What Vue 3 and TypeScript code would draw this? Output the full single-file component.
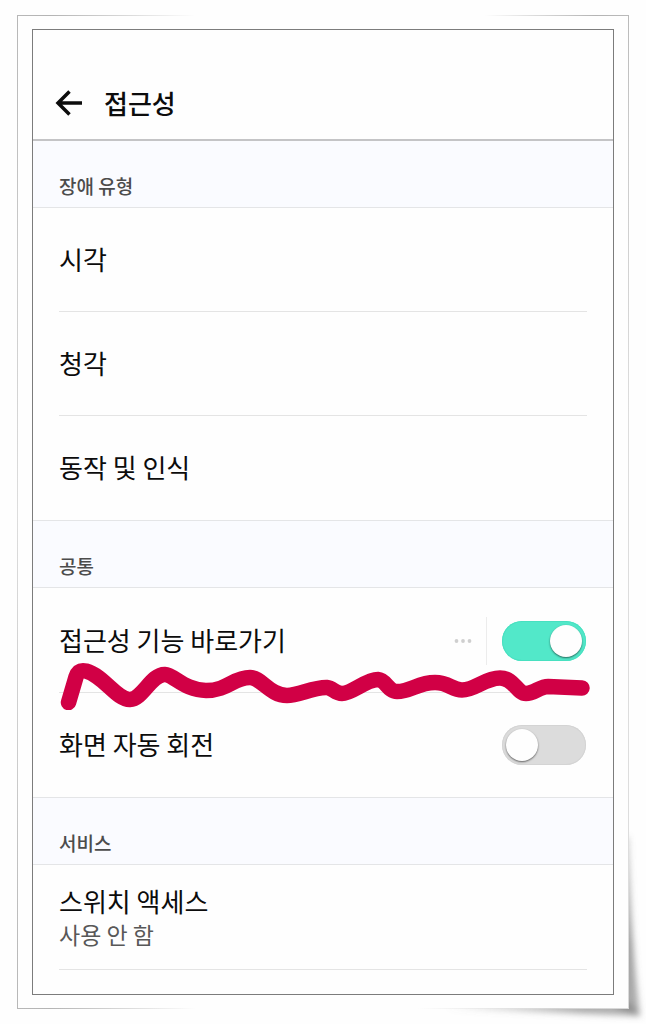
<script setup lang="ts">
import { ref } from 'vue'

const disabilityTypes: string[] = ['시각', '청각', '동작 및 인식']
const shortcutOn = ref<boolean>(true)
const rotateOn = ref<boolean>(false)
</script>

<template>
  <div class="page">
    <div class="paper">
      <svg class="curl" viewBox="0 0 220 200" aria-hidden="true">
        <defs>
          <filter id="curl-blur" x="-10%" y="-10%" width="120%" height="120%">
            <feGaussianBlur stdDeviation="3" />
          </filter>
          <linearGradient id="curl-side" x1="0" y1="0" x2="0" y2="1">
            <stop offset="0" stop-color="#777" stop-opacity="0.3" />
            <stop offset="0.6" stop-color="#777" stop-opacity="0.7" />
            <stop offset="1" stop-color="#777" stop-opacity="0.6" />
          </linearGradient>
          <linearGradient id="curl-base" x1="0" y1="0" x2="1" y2="0">
            <stop offset="0" stop-color="#777" stop-opacity="0" />
            <stop offset="0.7" stop-color="#777" stop-opacity="0.6" />
            <stop offset="1" stop-color="#777" stop-opacity="0.6" />
          </linearGradient>
        </defs>
        <g filter="url(#curl-blur)">
          <path d="M190 10 L203 10 Q205 120 214 189 L190 180 Z" fill="url(#curl-side)" />
          <path d="M20 176 L203 176 L214 189 Q120 185 20 182 Z" fill="url(#curl-base)" />
        </g>
      </svg>
      <div class="sheet">
        <main class="screen">
          <header class="bar">
            <button class="back" type="button" aria-label="뒤로">
              <svg viewBox="0 0 28 28" width="28" height="28" aria-hidden="true">
                <path d="M27 14H3M14.500 2.500L3 14L14.500 25.500" />
              </svg>
            </button>
            <h1>접근성</h1>
          </header>

          <section>
            <h2>장애 유형</h2>
            <button v-for="name in disabilityTypes" :key="name" class="row" type="button">
              <span class="line">{{ name }}</span>
            </button>
          </section>

          <section>
            <h2>공통</h2>
            <div class="switches">
              <div class="row tall">
                <label class="line" for="shortcut">접근성 기능 바로가기</label>
                <button class="more" type="button" aria-label="더보기">
                  <svg viewBox="0 0 18 4" width="18" height="4" aria-hidden="true">
                    <circle cx="2.500" cy="2" r="1.900" />
                    <circle cx="9" cy="2" r="1.900" />
                    <circle cx="15.500" cy="2" r="1.900" />
                  </svg>
                </button>
                <input id="shortcut" v-model="shortcutOn" class="toggle" type="checkbox" role="switch" />
              </div>
              <div class="row">
                <label class="line" for="rotate">화면 자동 회전</label>
                <input id="rotate" v-model="rotateOn" class="toggle" type="checkbox" role="switch" />
              </div>
              <svg class="scribble" viewBox="50 650 550 60" aria-hidden="true">
                <path
                  d="M68.500 702.500L76 677C78 671 81 670 86 671C104 676 117 700 130 699.500C143 699 151 674 165 674.500C174 675 185 690.500 206 690.500C228 690.500 233 677.500 250 677.500C261 677.500 270 695.500 287 695.500C299 695.500 313 687 327 687.500C333 688 335 693.500 342 693.500C352 693.500 366 679.500 378 679.500C386 680 388 691.500 397 691.500C411 691.500 418 682.500 435 682.500C449 682.500 452 690 462 690C475 690 485 678 500 678C514 678 517 693.500 526 693.500C534 693.500 540 686.500 548 686.500L582 688"
                />
              </svg>
            </div>
          </section>

          <section>
            <h2>서비스</h2>
            <button class="row tall service" type="button">
              <span class="line">스위치 액세스</span>
              <span class="state">사용 안 함</span>
            </button>
          </section>
        </main>
      </div>
    </div>
  </div>
</template>

<style>
body {
  margin: 0;
  background: #fff;
}
</style>

<style scoped>
.page {
  box-sizing: border-box;
  min-height: 100vh;
  padding: 15px 17px;
  overflow: hidden;
  background: #fefefe;
  font-family: "Noto Sans CJK KR", "Noto Sans", sans-serif;
  color: #0c0c0c;
}

.paper {
  position: relative;
  isolation: isolate;
}

.sheet {
  padding: 13px 14px;
  border: 1px solid #ccc;
  border-image: conic-gradient(from 0deg, #fefefe 0%, #fefefe 5%, #b4b4b4 8%, #ccc 11%, #ddd 20%, #ddd 40%, #d4d4d4 43%, #fefefe 47%, #fefefe 54%, #b4b4b4 58%, #ccc 64%, #ddd 75%, #ccc 86%, #b4b4b4 92%, #fefefe 96%) 1;
  background: #fefefe;
}

.curl {
  position: absolute;
  z-index: -1;
  right: -17px;
  bottom: -18px;
  width: 220px;
  height: 200px;
}

.screen {
  border: 1px solid #7c7c7c;
  padding-bottom: 24px;
}

.bar {
  display: flex;
  align-items: center;
  gap: 21px;
  padding: 36px 22px 0;
  height: 73px;
  border-bottom: 2px solid #c4c4c6;
}

button {
  margin: 0;
  padding: 0;
  border: 0;
  background: none;
  color: inherit;
  font: inherit;
  text-align: left;
}

.back {
  width: 28px;
  height: 28px;
}

.back svg,
.more svg {
  display: block;
}

.back path {
  fill: none;
  stroke: #0c0c0c;
  stroke-width: 3.5;
}

h1 {
  margin: 0;
  font-size: 26px;
  line-height: 34px;
  font-weight: 500;
}

h2 {
  margin: 0;
  padding: 31px 26px 7px;
  border-bottom: 1px solid #e4e5e7;
  background: #fafbff;
  color: #4c4c4c;
  font-size: 19px;
  line-height: 28px;
  font-weight: 500;
}

section + section h2 {
  border-top: 1px solid #e4e5e7;
}

.row {
  position: relative;
  display: flex;
  align-items: center;
  box-sizing: border-box;
  width: 100%;
  min-height: 104px;
  padding: 0 26px;
}

.row.tall {
  min-height: 105px;
}

.row:not(:last-of-type)::after,
.service::after {
  content: "";
  position: absolute;
  right: 26px;
  bottom: 0;
  left: 26px;
  height: 1px;
  background: #e4e4e4;
}

.line {
  flex: 1;
  padding-bottom: 2px;
  font-size: 26px;
  line-height: 34px;
}

.service {
  flex-direction: column;
  align-items: flex-start;
  justify-content: center;
}

.service .line {
  flex: none;
  padding-bottom: 0;
}

.state {
  padding-bottom: 2px;
  color: #585858;
  font-size: 23px;
  line-height: 32px;
}

.switches {
  position: relative;
}

.more {
  display: flex;
  align-items: center;
  height: 48px;
  padding-right: 14px;
  margin-right: 14px;
  border-right: 1px solid #ececec;
}

.more circle {
  fill: #cfcfcf;
}

.toggle {
  appearance: none;
  flex: none;
  box-sizing: border-box;
  width: 84px;
  height: 40px;
  margin: 0 1px;
  padding: 4px;
  border-radius: 20px;
  background: #dcdcdc;
  box-shadow: inset 0 0 0 1px #d4d4d4;
}

.toggle::before {
  content: "";
  display: block;
  width: 32px;
  height: 32px;
  border-radius: 50%;
  background: #fefefe;
  box-shadow: 0 1px 2px rgba(0, 0, 0, 0.55);
}

.toggle:checked {
  background: #52e8c9;
  box-shadow: inset 0 0 0 1px #48e0c0;
}

.toggle:checked::before {
  margin-left: auto;
}

.scribble {
  position: absolute;
  top: 62px;
  left: 17px;
  width: 550px;
  height: 60px;
  pointer-events: none;
}

.scribble path {
  fill: none;
  stroke: #d10045;
  stroke-width: 15.5;
  stroke-linecap: round;
  stroke-linejoin: round;
}
</style>
